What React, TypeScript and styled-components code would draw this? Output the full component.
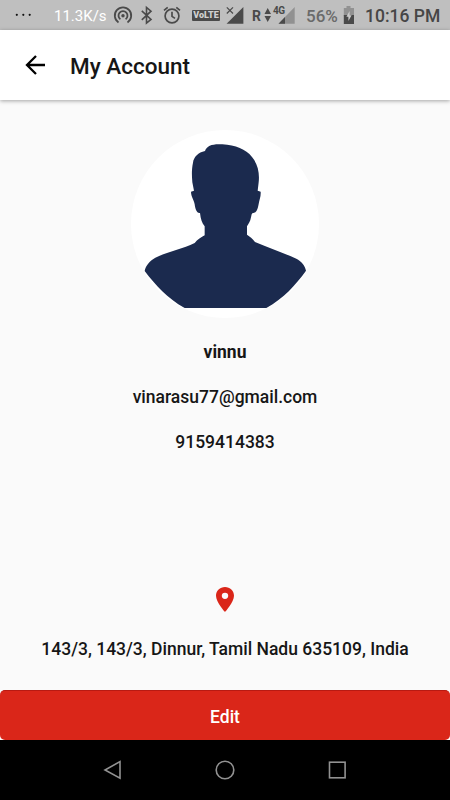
import React from "react";
import styled, { createGlobalStyle } from "styled-components";

const GlobalStyle = createGlobalStyle`
  * { box-sizing: border-box; }
  body { margin: 0; background: #fafafa; font-family: Roboto, "Liberation Sans", sans-serif; }
`;

const Screen = styled.div`
  display: flex;
  flex-direction: column;
  width: 450px;
  height: 800px;
  background: #fafafa;
  overflow: hidden;
`;

const StatusBar = styled.div`
  display: flex;
  align-items: flex-start;
  flex: none;
  height: 30px;
  background: #bfbfbf;
  color: #4a4a4a;
`;

const StatusSlot = styled.div<{ $width: number; $gap: number }>`
  flex: none;
  width: ${(p) => p.$width}px;
  height: 30px;
  margin-left: ${(p) => p.$gap}px;
  svg { display: block; }
`;

const StatusText = styled(StatusSlot)<{ $color: string; $size: number; $weight?: number; $spacing?: number }>`
  color: ${(p) => p.$color};
  font-size: ${(p) => p.$size}px;
  font-weight: ${(p) => p.$weight ?? 400};
  letter-spacing: ${(p) => p.$spacing ?? 0}px;
  line-height: 32px;
  white-space: nowrap;
`;

const VolteBadge = styled.div`
  width: 28px;
  height: 11px;
  margin-top: 10px;
  border-radius: 1px;
  background: #4a4a4a;
  color: #d0d0d0;
  font-size: 9px;
  font-weight: 900;
  line-height: 11px;
  text-align: center;
`;

const NetworkLabel = styled.div`
  position: absolute;
  left: 0;
  top: 5px;
  font-size: 10px;
  font-weight: 700;
  line-height: 12px;
  letter-spacing: -0.6px;
`;

const NetworkSlot = styled(StatusSlot)`
  position: relative;
`;

const AppBar = styled.header`
  display: flex;
  align-items: center;
  flex: none;
  height: 70px;
  padding: 0 25px;
  gap: 25px;
  background: #fff;
  box-shadow: 0 1px 4px rgba(0, 0, 0, 0.35);
`;

const IconButton = styled.button`
  display: flex;
  width: 20px;
  padding: 0;
  border: 0;
  background: none;
`;

const Title = styled.h1`
  margin: 1px 0 0;
  color: #161616;
  font-size: 22.5px;
  font-weight: 500;
  line-height: 30px;
`;

const Profile = styled.main`
  display: flex;
  flex: 1;
  flex-direction: column;
  align-items: center;
  padding-top: 30px;
`;

const Line = styled.p<{ $gap: number; $weight?: number }>`
  margin: ${(p) => p.$gap}px 0 0;
  color: #161616;
  font-size: 17.5px;
  font-weight: ${(p) => p.$weight ?? 500};
  line-height: 24px;
  white-space: nowrap;
`;

const Location = styled.section`
  display: flex;
  flex-direction: column;
  align-items: center;
  margin-top: auto;
  padding-bottom: 29px;
`;

const EditButton = styled.button`
  flex: none;
  height: 50px;
  padding: 2px 0 0;
  border: 0;
  border-top: 1px solid #b81a12;
  border-radius: 5px;
  background: #da2619;
  color: #fff;
  font-family: inherit;
  font-size: 17.5px;
  font-weight: 500;
`;

const NavBar = styled.nav`
  display: flex;
  align-items: center;
  justify-content: center;
  gap: 92.5px;
  flex: none;
  height: 60px;
  background: #000;
`;

const Avatar = () => (
  <svg width="188" height="188" viewBox="18 15 564 564">
    <circle cx="300" cy="297" r="282" fill="#fff" />
    <path
      fill="#1b2a4e"
      d="M240 78 C246 61 264 56 292 58 C332 61 362 72 381 96 C399 117 404 145 401 172 L398 197 L407 200 C408 214 403 224 401 237 C398 254 393 265 384 264 C379 265 380 270 378 277 C376 290 370 297 366 304 L366 329 C374 334 383 341 390 351 C430 368 474 383 514 401 C529 409 540 421 543 437 C511 481 477 519 424 549 L179 549 C126 519 93 482 59 438 C62 421 75 407 91 398 C128 380 171 373 209 354 C217 343 229 337 239 331 L239 304 C231 294 227 282 225 264 C215 266 211 252 209 238 C207 225 198 215 198 200 L207 197 L202 172 C200 148 200 133 204 113 C206 96 220 82 240 78 Z"
    />
  </svg>
);

const App = () => (
  <Screen>
    <GlobalStyle />
    <StatusBar>
      <StatusSlot $width={17} $gap={15}>
        <svg width="17" height="30" fill="#111">
          <circle cx="1.8" cy="14.8" r="1.1" />
          <circle cx="8.3" cy="14.8" r="1.1" />
          <circle cx="14.7" cy="14.8" r="1.1" />
        </svg>
      </StatusSlot>
      <StatusText $width={54} $gap={22} $color="#fff" $size={15}>11.3K/s</StatusText>
      <StatusSlot $width={20} $gap={5}>
        <svg width="20" height="30" fill="none" stroke="#4a4a4a" strokeWidth="1.8">
          <path d="M5.5 22.4 A8.2 8.2 0 1 1 14.5 22.4" />
          <path d="M7.4 19.2 A4.5 4.5 0 1 1 12.6 19.2" />
          <circle cx="10" cy="15.7" r="1.7" fill="#4a4a4a" stroke="none" />
        </svg>
      </StatusSlot>
      <StatusSlot $width={14} $gap={7}>
        <svg width="14" height="30" fill="none" stroke="#4a4a4a" strokeWidth="1.6">
          <path d="M1.8 10.8 L11 19.4 L6.5 23 V7.4 L11 11.2 L1.8 19.8" />
        </svg>
      </StatusSlot>
      <StatusSlot $width={18} $gap={9}>
        <svg width="18" height="30" fill="none" stroke="#4a4a4a" strokeWidth="1.7">
          <circle cx="9" cy="16" r="6.9" />
          <path d="M9 11.8 V16.4 L12 18.4 M1 10.4 L4.7 7.4 M17 10.4 L13.3 7.4" />
        </svg>
      </StatusSlot>
      <StatusSlot $width={28} $gap={11}>
        <VolteBadge>VoLTE</VolteBadge>
      </StatusSlot>
      <StatusSlot $width={18} $gap={6}>
        <svg width="18" height="30">
          <path d="M17.4 7 V23.7 H.6 Z" fill="#4a4a4a" />
          <path d="M0 6 H9 V14 H0 Z" fill="#bfbfbf" />
          <path d="M.8 7.3 L7 13.5 M7 7.3 L.8 13.5" stroke="#4a4a4a" strokeWidth="1.2" />
        </svg>
      </StatusSlot>
      <StatusText $width={10} $gap={8} $color="#4a4a4a" $size={14} $weight={700}>R</StatusText>
      <StatusSlot $width={8} $gap={2}>
        <svg width="8" height="30" fill="#4a4a4a">
          <path d="M.5 14 L3.7 8 L7 14 Z M.5 16 L3.7 22 L7 16 Z" />
        </svg>
      </StatusSlot>
      <NetworkSlot $width={23} $gap={1}>
        <svg width="23" height="30">
          <path d="M21.7 7 V23.7 H5.5 Z" fill="#919191" />
          <path d="M0 6 H12 V14 H0 Z" fill="#bfbfbf" />
          <path d="M12 17 V23.7 H5.5 Z" fill="#4a4a4a" />
        </svg>
        <NetworkLabel>4G</NetworkLabel>
      </NetworkSlot>
      <StatusText $width={34} $gap={10} $color="#6a6a6a" $size={17} $weight={500}>56%</StatusText>
      <StatusSlot $width={12} $gap={3}>
        <svg width="12" height="30">
          <path d="M3.5 6 H7.5 V8 H11 V16 H.8 V8 H3.5 Z" fill="#929292" />
          <path d="M.8 15 H11 V24 H.8 Z" fill="#4a4a4a" />
          <path d="M6.6 11 L3.4 16.8 H5.4 V21 L8.6 15.2 H6.6 Z" fill="#ccc" />
        </svg>
      </StatusSlot>
      <StatusText $width={78} $gap={10} $color="#464646" $size={17.5} $weight={500}>10:16 PM</StatusText>
    </StatusBar>
    <AppBar>
      <IconButton aria-label="Back">
        <svg width="20" height="20" fill="none" stroke="#000" strokeWidth="2.3">
          <path d="M20 10 H2 M11 1 L2 10 L11 19" />
        </svg>
      </IconButton>
      <Title>My Account</Title>
    </AppBar>
    <Profile>
      <Avatar />
      <Line $gap={22} $weight={700}>vinnu</Line>
      <Line $gap={21}>vinarasu77@gmail.com</Line>
      <Line $gap={21}>9159414383</Line>
      <Location>
        <svg width="18" height="25" viewBox="5 2 14 20" preserveAspectRatio="none">
          <path
            fill="#da2619"
            d="M12 2C8.13 2 5 5.13 5 9c0 5.25 7 13 7 13s7-7.75 7-13c0-3.87-3.13-7-7-7zm0 9.5a2.5 2.5 0 0 1 0-5 2.5 2.5 0 0 1 0 5z"
          />
        </svg>
        <Line $gap={25}>143/3, 143/3, Dinnur, Tamil Nadu 635109, India</Line>
      </Location>
    </Profile>
    <EditButton>Edit</EditButton>
    <NavBar>
      <svg width="19" height="20" fill="none" stroke="#929292" strokeWidth="1.6">
        <path d="M17 1.6 V18.2 L2 10 Z" />
      </svg>
      <svg width="20" height="20" fill="none" stroke="#929292" strokeWidth="1.6">
        <circle cx="10" cy="10" r="8.8" />
      </svg>
      <svg width="20" height="20" fill="none" stroke="#929292" strokeWidth="1.6">
        <rect x="2.5" y="2.2" width="15.6" height="15.6" />
      </svg>
    </NavBar>
  </Screen>
);

export default App;
